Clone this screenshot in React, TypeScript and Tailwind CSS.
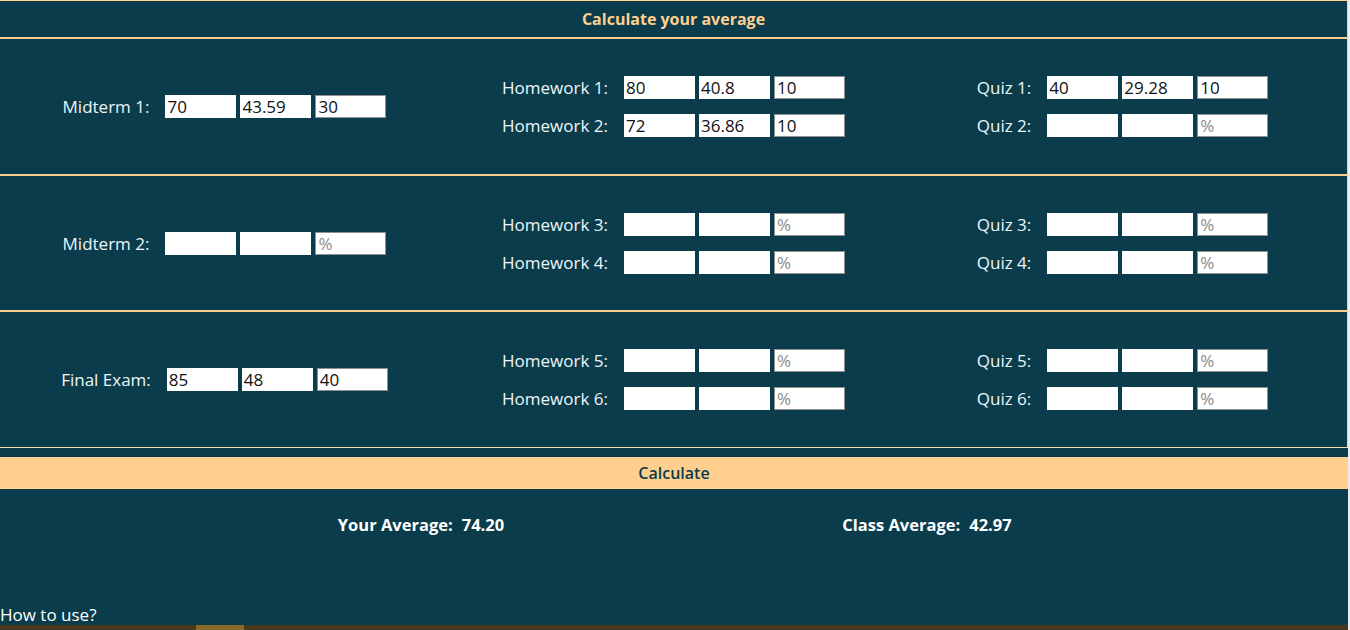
import React from "react";

type Row = { label: string; values: [string, string, string] };

const sections: { main: Row; homework: Row[]; quiz: Row[] }[] = [
  {
    main: { label: "Midterm 1:", values: ["70", "43.59", "30"] },
    homework: [
      { label: "Homework 1:", values: ["80", "40.8", "10"] },
      { label: "Homework 2:", values: ["72", "36.86", "10"] },
    ],
    quiz: [
      { label: "Quiz 1:", values: ["40", "29.28", "10"] },
      { label: "Quiz 2:", values: ["", "", ""] },
    ],
  },
  {
    main: { label: "Midterm 2:", values: ["", "", ""] },
    homework: [
      { label: "Homework 3:", values: ["", "", ""] },
      { label: "Homework 4:", values: ["", "", ""] },
    ],
    quiz: [
      { label: "Quiz 3:", values: ["", "", ""] },
      { label: "Quiz 4:", values: ["", "", ""] },
    ],
  },
  {
    main: { label: "Final Exam:", values: ["85", "48", "40"] },
    homework: [
      { label: "Homework 5:", values: ["", "", ""] },
      { label: "Homework 6:", values: ["", "", ""] },
    ],
    quiz: [
      { label: "Quiz 5:", values: ["", "", ""] },
      { label: "Quiz 6:", values: ["", "", ""] },
    ],
  },
];

function Field({ value, weight }: { value: string; weight?: boolean }) {
  return (
    <input
      readOnly
      defaultValue={value}
      placeholder={weight ? "%" : ""}
      className={`w-[71px] h-[23px] bg-white px-[2px] text-[17px] leading-none text-[#111] outline-none placeholder:text-[#8a8a8a] ${
        weight ? "border border-[#8f8f8f]" : "border-0"
      }`}
    />
  );
}

function InputRow({ row }: { row: Row }) {
  return (
    <div className="flex h-[23px] items-center">
      <span className="mr-[16px] text-[17px] leading-[23px] text-[#eef6f8]">{row.label}</span>
      <div className="flex gap-[4px]">
        <Field value={row.values[0]} />
        <Field value={row.values[1]} />
        <Field value={row.values[2]} weight />
      </div>
    </div>
  );
}

const sectionClass = [
  "h-[137px] border-b-2 border-[#ffcf90]",
  "h-[136px] border-b-2 border-[#ffcf90]",
  "h-[136px] border-b border-[#f1dfb8]",
];

export default function App() {
  return (
    <div
      className="flex w-[1350px] h-[630px] overflow-hidden bg-[#ececec]"
      style={{ fontFamily: '"Open Sans", "Noto Sans", sans-serif' }}
    >
      <div className="flex w-[1348px] flex-col bg-[#0a3c4b]">
        <div className="border-r border-[#ffcf90]">
          <div className="flex h-[39px] items-center justify-center border-t border-b-2 border-[#ffcf90] text-[16px] font-bold text-[#ffcf90]">
            Calculate your average
          </div>
          {sections.map((s, i) => (
            <div key={i} className={`flex ${sectionClass[i]}`}>
              <div className="flex w-1/3 items-center justify-center">
                <InputRow row={s.main} />
              </div>
              <div className="flex w-1/3 flex-col items-center justify-center gap-[15px]">
                {s.homework.map((r) => (
                  <InputRow key={r.label} row={r} />
                ))}
              </div>
              <div className="flex w-1/3 flex-col items-center justify-center gap-[15px]">
                {s.quiz.map((r) => (
                  <InputRow key={r.label} row={r} />
                ))}
              </div>
            </div>
          ))}
        </div>

        <button className="mt-[9px] flex h-[32px] items-center justify-center bg-[#ffcf90] text-[16px] font-semibold text-[#0a3c4b]">
          Calculate
        </button>

        <div className="flex flex-1 flex-col">
          <div className="flex justify-center pt-[24px] text-[16.5px] font-bold text-white">
            <div className="flex w-[506px] justify-center">
              <span>Your Average:</span>
              <span className="ml-[9px]">74.20</span>
            </div>
            <div className="flex w-[506px] justify-center">
              <span>Class Average:</span>
              <span className="ml-[9px]">42.97</span>
            </div>
          </div>
          <div className="mt-auto text-[17px] leading-[20px] text-white">How to use?</div>
        </div>

        <div className="flex h-[5px] bg-[#47381c]">
          <div className="ml-[196px] w-[48px] bg-[#8a6a28]" />
        </div>
      </div>
      <div className="w-[2px] bg-[#ececec]" />
    </div>
  );
}
